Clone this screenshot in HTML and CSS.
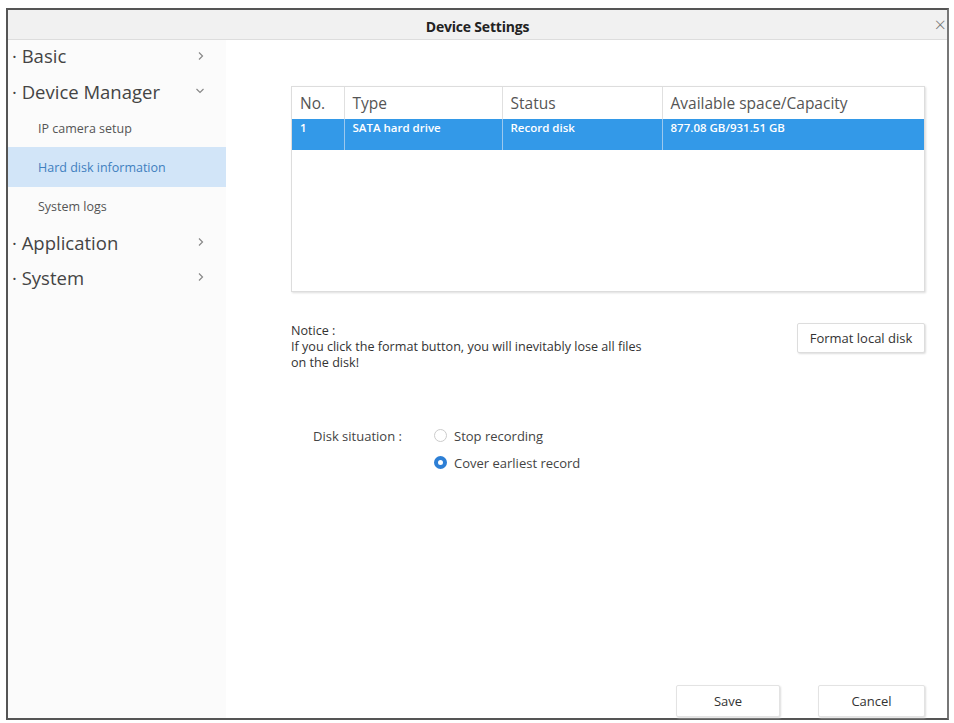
FILE: index.html
```html
<!DOCTYPE html>
<html>
<head>
<meta charset="utf-8">
<link rel="stylesheet" href="styles.css">
</head>
<body>
<div class="window">
  <div class="titlebar">
    <span class="title">Device Settings</span>
    <span class="close">×</span>
  </div>
  <div class="body">
    <aside class="sidebar">
      <div class="group"><span>· Basic</span><svg class="chev" width="8" height="10" viewBox="0 0 8 10"><path d="M2 1.5 L5.5 5 L2 8.5" fill="none" stroke="#888" stroke-width="1.2"/></svg></div>
      <div class="group"><span>· Device Manager</span><svg class="chev" width="10" height="8" viewBox="0 0 10 8"><path d="M1.5 2 L5 5.5 L8.5 2" fill="none" stroke="#888" stroke-width="1.2"/></svg></div>
      <div class="sub">IP camera setup</div>
      <div class="sub active">Hard disk information</div>
      <div class="sub">System logs</div>
      <div class="group"><span>· Application</span><svg class="chev" width="8" height="10" viewBox="0 0 8 10"><path d="M2 1.5 L5.5 5 L2 8.5" fill="none" stroke="#888" stroke-width="1.2"/></svg></div>
      <div class="group"><span>· System</span><svg class="chev" width="8" height="10" viewBox="0 0 8 10"><path d="M2 1.5 L5.5 5 L2 8.5" fill="none" stroke="#888" stroke-width="1.2"/></svg></div>
    </aside>
    <main class="content">
      <div class="tablebox">
        <table class="disks">
          <thead>
            <tr><th class="c1">No.</th><th class="c2">Type</th><th class="c3">Status</th><th class="c4">Available space/Capacity</th></tr>
          </thead>
          <tbody>
            <tr class="sel"><td>1</td><td>SATA hard drive</td><td>Record disk</td><td>877.08 GB/931.51 GB</td></tr>
          </tbody>
        </table>
      </div>
      <div class="notice-row">
        <div class="notice">
          <div>Notice :</div>
          <div>If you click the format button, you will inevitably lose all files<br>on the disk!</div>
        </div>
        <button class="btn format">Format local disk</button>
      </div>
      <div class="situation">
        <div class="label">Disk situation :</div>
        <div class="options">
          <label class="opt"><span class="radio"></span>Stop recording</label>
          <label class="opt"><span class="radio on"></span>Cover earliest record</label>
        </div>
      </div>
      <div class="footer">
        <button class="btn foot">Save</button>
        <button class="btn foot">Cancel</button>
      </div>
    </main>
  </div>
</div>
</body>
</html>
```
FILE: styles.css
```css
* { box-sizing: border-box; }
html, body { margin: 0; padding: 0; background: #fff; }
body {
  font-family: "Open Sans", "Noto Sans", "Liberation Sans", sans-serif;
  color: #333;
  padding: 8px 5px 3px 6px;
}
.window {
  width: 943px;
  height: 712px;
  border: 2px solid #555;
  border-right-color: #777;
  display: flex;
  flex-direction: column;
  background: #fff;
}
.titlebar {
  height: 30px;
  background: #f1f1f1;
  border-bottom: 1px solid #ddd;
  display: flex;
  align-items: center;
  justify-content: center;
  position: relative;
  padding-top: 4px;
}
.title {
  font-weight: 700;
  font-size: 14px;
  color: #222;
  letter-spacing: -0.2px;
}
.close {
  position: absolute;
  right: 1px;
  top: 4px;
  font-size: 20px;
  font-weight: 300;
  color: #777;
  line-height: 22px;
}
.body { flex: 1; display: flex; min-height: 0; }
.sidebar {
  width: 218px;
  background: #fbfbfb;
}
.group {
  height: 34px;
  display: flex;
  align-items: center;
  justify-content: space-between;
  padding: 0 21px 0 4px;
  font-size: 18.5px;
  color: #444;
  margin-bottom: 1px;
}
.group:first-child { height: 31px; margin-bottom: 3px; }
.sub {
  height: 38px;
  display: flex;
  align-items: center;
  padding-left: 30px;
  font-size: 12.5px;
  color: #555;
}
.sub.active { background: #d2e5f8; color: #3f7fbf; height: 40px; }
.content {
  flex: 1;
  display: flex;
  flex-direction: column;
  padding: 46px 22px 0 65px;
}
.tablebox {
  height: 206px;
  border: 1px solid #ddd;
  box-shadow: 1px 1px 2px #ddd;
}
.disks {
  width: 100%;
  border-collapse: collapse;
}
.disks th {
  text-align: left;
  font-weight: 400;
  font-size: 15.5px;
  color: #555;
  height: 32px;
  padding: 0 6px 0 8px;
  border-left: 1px solid #e0e0e0;
}
.disks th:first-child { border-left: none; }
.c1 { width: 52px; }
.c2 { width: 158px; }
.c3 { width: 160px; }
.disks td {
  height: 31px;
  padding: 1px 6px 0 8px;
  font-size: 11.5px;
  font-weight: 600;
  color: #fff;
  border-left: 1px solid #9cc8ee;
  vertical-align: top;
}
.disks td:first-child { border-left: none; }
.sel { background: #3399e8; }
.notice-row {
  margin-top: 31px;
  display: flex;
  justify-content: space-between;
  align-items: flex-start;
}
.notice { font-size: 12.6px; line-height: 16px; color: #333; }
.btn {
  font-family: inherit;
  background: #fff;
  border: 1px solid #ddd;
  box-shadow: 1px 1px 2px #ddd;
  color: #333;
  border-radius: 2px;
}
.format { height: 30px; width: 128px; font-size: 13px; margin-top: 0; padding: 0; }
.situation {
  margin-top: 55px;
  display: flex;
  padding-left: 22px;
  font-size: 13px;
  color: #444;
}
.label { width: 121px; padding-top: 1px; }
.options { display: flex; flex-direction: column; gap: 8px; }
.opt { display: flex; align-items: center; gap: 7px; height: 19px; }
.radio {
  width: 13px; height: 13px;
  border-radius: 50%;
  border: 1px solid #ccc;
  background: #fff;
}
.radio.on { border: 4px solid #2d7fd5; background: #fff; }
.footer {
  margin-top: auto;
  display: flex;
  justify-content: flex-end;
  gap: 38px;
  padding-bottom: 1px;
}
.foot { width: 104px; height: 32px; font-size: 13px; border-color: #e3e3e3; }
.foot:last-child { width: 107px; }
```
